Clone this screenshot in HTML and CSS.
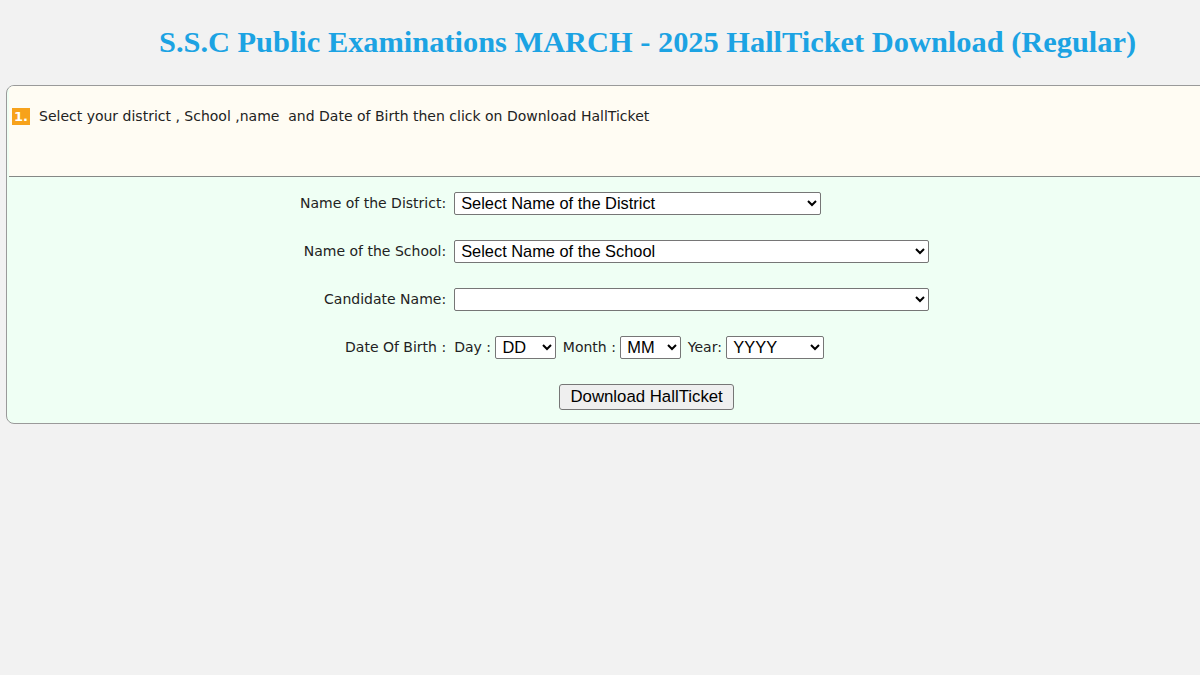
FILE: index.html
```html
<!DOCTYPE html>
<html lang="en">
<head>
  <meta charset="UTF-8" />
  <title>SSC Hall Ticket</title>
  <link rel="stylesheet" href="styles.css">
</head>
<body>
  <h1 class="title">S.S.C Public Examinations MARCH - 2025 HallTicket Download (Regular)</h1>

  <div class="panel">
    <div class="info">
      <span class="step">1.</span>
      <span class="info-text">Select your district , School ,name&nbsp; and Date of Birth then click on Download HallTicket</span>
    </div>
    <div class="form-area">
      <table class="form">
        <tr>
          <td class="label">Name of the District:</td>
          <td><select class="sel sel-district"><option>Select Name of the District</option></select></td>
        </tr>
        <tr>
          <td class="label">Name of the School:</td>
          <td><select class="sel sel-wide"><option>Select Name of the School</option></select></td>
        </tr>
        <tr>
          <td class="label">Candidate Name:</td>
          <td><select class="sel sel-wide"><option></option></select></td>
        </tr>
        <tr>
          <td class="label">Date Of Birth :</td>
          <td class="dob">
            Day : <select class="sel sel-dd"><option>DD</option></select>
            Month : <select class="sel sel-dd"><option>MM</option></select>
            Year: <select class="sel sel-yy"><option>YYYY</option></select>
          </td>
        </tr>
        <tr>
          <td></td>
          <td class="btn-cell"><button class="dl-btn">Download HallTicket</button></td>
        </tr>
      </table>
    </div>
  </div>
</body>
</html>
```

FILE: styles.css
```css
body {
  margin: 0;
  background-color: #f2f2f2;
  font-family: 'DejaVu Sans', Verdana, sans-serif;
  color: #222;
}
.title {
  margin: 0;
  padding: 24px 0 0 159px;
  height: 85px;
  box-sizing: border-box;
  font-family: 'Liberation Serif', 'Times New Roman', serif;
  font-size: 30.4px;
  line-height: 36px;
  font-weight: bold;
  color: #1ca3e3;
  white-space: nowrap;
}
.panel {
  margin-left: 6px;
  width: 1220px;
  border: 1px solid #9a9a9a;
  border-radius: 8px;
  background-color: #effff4;
  overflow: hidden;
}
.info {
  background-color: #fffcf3;
  height: 91px;
  padding: 22px 0 0 3px;
  box-sizing: border-box;
  border-bottom: 1px solid #858885;
  margin-left: 2px;
  display: flex;
  align-items: flex-start;
}
.step {
  display: inline-block;
  background-color: #f7a21b;
  color: #fff;
  font-size: 13px;
  font-weight: bold;
  width: 18px;
  height: 17px;
  line-height: 17px;
  text-align: center;
}
.info-text {
  margin-left: 9px;
  font-size: 14px;
  line-height: 17px;
  color: #222;
}
.form-area {
  padding: 2px 0 0 0;
}
.form {
  border-collapse: collapse;
  margin-left: 293px;
}
.form td {
  padding: 0;
  height: 48px;
  font-size: 14px;
  color: #222;
}
.label {
  text-align: right;
  padding-right: 8px !important;
}
.sel {
  font-family: 'Liberation Sans', Arial, sans-serif;
  font-size: 16.4px;
  height: 23px;
  border: 1px solid #767676;
  border-radius: 2px;
  background-color: #fff;
  color: #000;
  padding: 0 2px;
  vertical-align: middle;
}
.sel-district {
  width: 367px;
}
.sel-wide {
  width: 475px;
}
.sel-dd {
  width: 61px;
  margin-right: 2px;
}
.sel-yy {
  width: 98px;
}
.dob {
  white-space: nowrap;
}
.btn-cell {
  padding-left: 105px !important;
  height: 52px !important;
}
.dl-btn {
  font-family: 'Liberation Sans', Arial, sans-serif;
  font-size: 16.8px;
  width: 175px;
  height: 26px;
  padding: 0;
  background-color: #efefef;
  border: 1px solid #767676;
  border-radius: 3px;
  color: #000;
}
```
